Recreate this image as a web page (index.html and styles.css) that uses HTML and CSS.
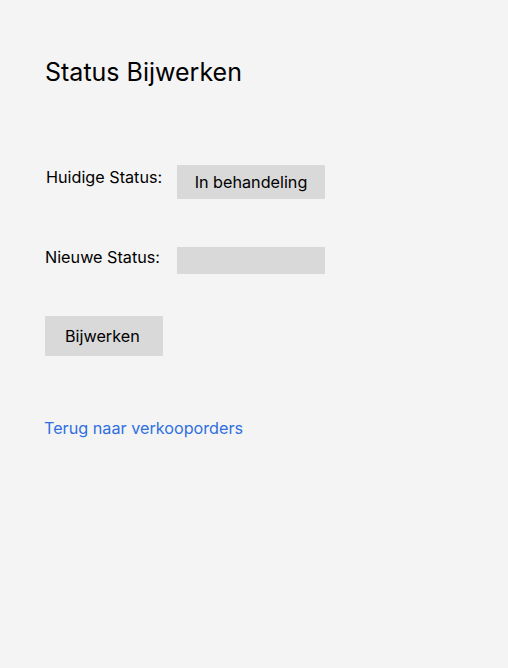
FILE: index.html
```html
<!DOCTYPE html>
<html lang="nl">
<head>
<meta charset="utf-8">
<link rel="stylesheet" href="styles.css">
</head>
<body>
<main class="page">
  <h1 class="title">Status Bijwerken</h1>
  <div class="row row-current">
    <span class="label label-current">Huidige Status:</span>
    <span class="status-box">In behandeling</span>
  </div>
  <div class="row row-new">
    <span class="label">Nieuwe Status:</span>
    <span class="select-box"></span>
  </div>
  <button class="btn">Bijwerken</button>
  <a class="back" href="#">Terug naar verkooporders</a>
</main>
</body>
</html>
```
FILE: styles.css
```css
html, body {
  margin: 0;
  padding: 0;
  background: #f4f4f4;
}
body {
  font-family: Inter, "Noto Sans", sans-serif;
  color: #000;
  width: 508px;
  height: 668px;
}
.page {
  padding: 57px 45px 0 45px;
  display: flex;
  flex-direction: column;
  align-items: flex-start;
}
.title {
  margin: 0;
  font-size: 25px;
  font-weight: 400;
  line-height: 30px;
}
.row {
  display: flex;
  align-items: flex-start;
}
.row-current {
  margin-top: 78px;
}
.label {
  width: 132px;
  font-size: 16.2px;
  line-height: 20px;
}
.label-current {
  padding-left: 1px;
  padding-top: 2px;
  width: 131px;
}
.status-box {
  width: 148px;
  height: 34px;
  background: #d9d9d9;
  font-size: 16.2px;
  line-height: 34px;
  text-align: center;
}
.row-new {
  margin-top: 48px;
}
.select-box {
  width: 148px;
  height: 27px;
  background: #d9d9d9;
}
.btn {
  margin-top: 42px;
  width: 118px;
  height: 40px;
  border: none;
  background: #d9d9d9;
  font-family: inherit;
  font-size: 16.2px;
  color: #000;
  padding: 0 0 0 20px;
  text-align: left;
}
.back {
  margin-top: 62px;
  margin-left: -1px;
  font-size: 16.2px;
  line-height: 20px;
  color: #2f6fe0;
  text-decoration: none;
}
```
